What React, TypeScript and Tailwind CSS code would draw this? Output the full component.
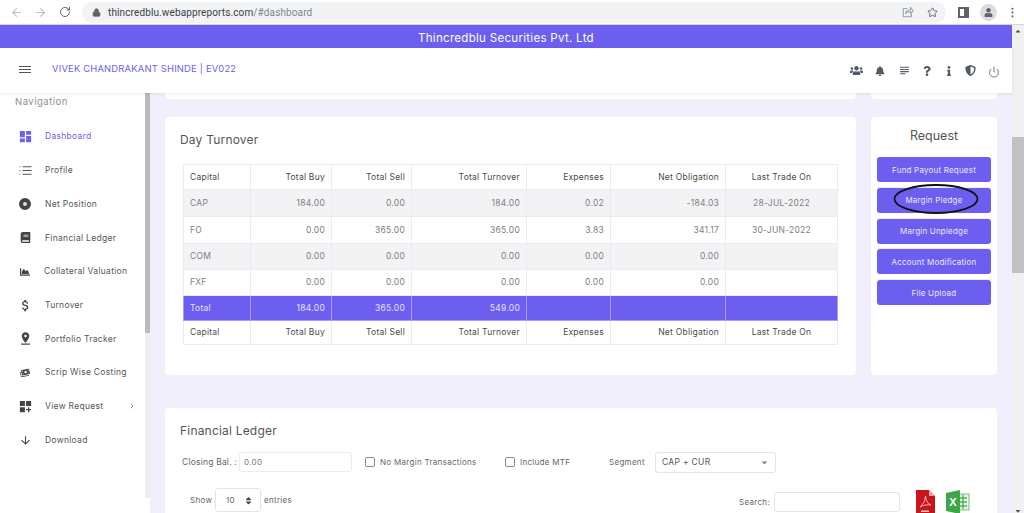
import { ArrowLeft, ArrowRight, RotateCw, Lock, Star, EllipsisVertical, ChevronRight } from "lucide-react";
import { FaUsers, FaBell, FaQuestion, FaInfo, FaShieldAlt, FaBook, FaChartArea, FaCaretUp, FaCaretDown, FaUser } from "react-icons/fa";
import { FaMoneyBills } from "react-icons/fa6";
import { MdDashboard, MdPinDrop, MdDashboardCustomize, MdSubject, MdAttachMoney, MdArrowDownward } from "react-icons/md";
import { FiList, FiPower } from "react-icons/fi";

const navItems = [
  { label: "Dashboard", icon: <MdDashboard className="size-[15px]" />, active: true },
  { label: "Profile", icon: <FiList className="size-[15px] stroke-[1.5]" /> },
  { label: "Net Position", icon: <div className="size-[12px] rounded-full border-[4px] border-[#444] bg-[#ddd]" /> },
  { label: "Financial Ledger", icon: <FaBook className="size-[11px]" /> },
  { label: "Collateral Valuation", icon: <FaChartArea className="size-[10px]" />, shift: true },
  { label: "Turnover", icon: <MdAttachMoney className="size-[15px]" /> },
  { label: "Portfolio Tracker", icon: <MdPinDrop className="size-[15px]" /> },
  { label: "Scrip Wise Costing", icon: <FaMoneyBills className="size-[10px] -rotate-12" /> },
  { label: "View Request", icon: <MdDashboardCustomize className="size-[15px]" />, arrow: true },
  { label: "Download", icon: <MdArrowDownward className="size-[13px]" /> },
];

const headerIcons = [
  { icon: <FaUsers className="size-[13px]" />, slot: "w-[24px]" },
  { icon: <FaBell className="size-[10px]" />, slot: "w-[24px]" },
  { icon: <MdSubject className="size-[13px]" />, slot: "w-[24px]" },
  { icon: <FaQuestion className="size-[10px]" />, slot: "w-[22px]" },
  { icon: <FaInfo className="size-[10px]" />, slot: "w-[21px]" },
  { icon: <FaShieldAlt className="size-[11px]" />, slot: "w-[23px]" },
  { icon: <FiPower className="size-[12px] text-[#777] mt-[3px]" />, slot: "w-[24px]" },
];

const columns = ["Capital", "Total Buy", "Total Sell", "Total Turnover", "Expenses", "Net Obligation", "Last Trade On"];

const rows = [
  { cells: ["CAP", "184.00", "0.00", "184.00", "0.02", "-184.03", "28-JUL-2022"], h: "h-[27px]", bg: "bg-[#f3f3f6]" },
  { cells: ["FO", "0.00", "365.00", "365.00", "3.83", "341.17", "30-JUN-2022"], h: "h-[27px]", bg: "bg-white" },
  { cells: ["COM", "0.00", "0.00", "0.00", "0.00", "0.00", ""], h: "h-[26px]", bg: "bg-[#f3f3f6]" },
  { cells: ["FXF", "0.00", "0.00", "0.00", "0.00", "0.00", ""], h: "h-[26px]", bg: "bg-white" },
];

const requests = ["Fund Payout Request", "Margin Pledge", "Margin Unpledge", "Account Modification", "File Upload"];

function cellAlign(i: number) {
  if (i === 0) return "text-left";
  if (i === 6) return "text-center";
  return "text-right";
}

function ChromeBar() {
  return (
    <div className="h-[25px] flex items-center bg-white text-[#5f6368] border-b border-[#d5d3ea] shrink-0">
      <ArrowLeft className="size-[13px] ml-[10px] text-[#bdbfc3]" />
      <ArrowRight className="size-[13px] ml-[11px] text-[#bdbfc3]" />
      <RotateCw className="size-[12px] ml-[12px] text-[#5f6368]" />
      <div className="ml-[11px] flex-1 h-[21px] rounded-full bg-[#f1f3f4] flex items-center pl-[10px] pr-[8px]">
        <Lock className="size-[9px] text-[#5f6368]" fill="#5f6368" />
        <span className="ml-[7px] text-[10px] text-[#3c4043] font-['Roboto',sans-serif] tracking-[0.12px]">
          thincredblu.webappreports.com<span className="text-[#80868b]">/#dashboard</span>
        </span>
        <svg viewBox="0 0 14 14" className="size-[12px] ml-auto text-[#9aa0a6]" fill="none" stroke="currentColor" strokeWidth="1.2">
          <path d="M6 3H1.5V12.5H11V9" />
          <path d="M4 9C4.5 6 7 4.5 10 4.5V2L13 5.5L10 9V6.5C7.5 6.5 5.5 7 4 9Z" />
        </svg>
        <Star className="size-[11px] ml-[13px] text-[#5f6368]" />
      </div>
      <div className="size-[11px] ml-[12px] border-2 border-[#5f6368] flex justify-end">
        <div className="w-[3px] bg-[#5f6368]" />
      </div>
      <div className="size-[17px] ml-[11px] rounded-full bg-[#dadce0] flex items-center justify-center">
        <FaUser className="size-[9px] text-[#5f6368]" />
      </div>
      <EllipsisVertical className="size-[13px] ml-[9px] mr-[5px]" />
    </div>
  );
}

function Header() {
  return (
    <div className="h-[45px] flex items-center bg-white shadow-[0_1px_3px_rgba(0,0,0,0.08)] z-10 relative shrink-0">
      <div className="ml-[19px] -mt-[2px] w-[12px] flex flex-col gap-[1.5px]">
        <div className="h-[1.5px] bg-[#555]" />
        <div className="h-[1.5px] bg-[#555]" />
        <div className="h-[1.5px] bg-[#555]" />
      </div>
      <span className="ml-[21px] -mt-[3px] text-[#6c5ff0] text-[9.4px] tracking-[0.2px]">VIVEK CHANDRAKANT SHINDE | EV022</span>
      <div className="ml-auto flex items-center text-[#4f5b67] pr-[6px]">
        {headerIcons.map((h, i) => (
          <div key={i} className={`${h.slot} flex justify-center`}>{h.icon}</div>
        ))}
      </div>
    </div>
  );
}

function Sidebar() {
  return (
    <div className="w-[150px] shrink-0 flex bg-white h-full">
      <div className="flex-1 min-w-0">
        <div className="pl-[15px] h-[17px] mt-[1px] flex items-center text-[9.5px] tracking-[0.5px] text-[#8a8f94]">Navigation</div>
        <div className="mt-[9px] flex flex-col">
          {navItems.map(item => (
            <div key={item.label} className={`h-[33.7px] flex items-center pr-[9px] ${item.active ? "text-[#6c5ff0]" : "text-[#555]"}`}>
              <div className={`w-[45px] flex justify-center pl-[5px] shrink-0 ${item.active ? "" : "text-[#444]"}`}>{item.icon}</div>
              <span className={`text-[8.5px] tracking-[0.3px] whitespace-nowrap ${item.shift ? "-ml-[1px]" : ""}`}>{item.label}</span>
              {item.arrow && <ChevronRight className="size-[8px] ml-auto" />}
            </div>
          ))}
        </div>
      </div>
      <div className="w-[5px] h-[405px] bg-[#eeeeee]">
        <div className="h-[240px] bg-[#bbbbbb]" />
      </div>
    </div>
  );
}

function TurnoverTable() {
  return (
    <table className="table-fixed w-[654px] border-collapse text-[8.5px] tracking-[0.25px]">
      <colgroup>
        <col className="w-[67px]" />
        <col className="w-[81px]" />
        <col className="w-[80px]" />
        <col className="w-[115px]" />
        <col className="w-[84px]" />
        <col className="w-[115px]" />
        <col className="w-[112px]" />
      </colgroup>
      <thead>
        <tr className="h-[25px] text-[#4a4a4a]">
          {columns.map((c, i) => (
            <th key={c} className={`font-normal border border-[#ececf0] px-[6px] ${cellAlign(i)}`}>{c}</th>
          ))}
        </tr>
      </thead>
      <tbody>
        {rows.map(r => (
          <tr key={r.cells[0]} className={`${r.h} ${r.bg} text-[#7d7f83]`}>
            {r.cells.map((c, i) => (
              <td key={i} className={`border border-[#ececf0] px-[6px] ${cellAlign(i)}`}>{c}</td>
            ))}
          </tr>
        ))}
        <tr className="h-[25px] bg-[#6c5ff0] text-[#e4e1fd]">
          {["Total", "184.00", "365.00", "549.00", "", "", ""].map((c, i) => (
            <td key={i} className={`border border-[#a59df6] px-[6px] ${cellAlign(i)}`}>{c}</td>
          ))}
        </tr>
      </tbody>
      <tfoot>
        <tr className="h-[24px] text-[#4a4a4a]">
          {columns.map((c, i) => (
            <th key={c} className={`font-normal border border-[#ececf0] px-[6px] ${cellAlign(i)}`}>{c}</th>
          ))}
        </tr>
      </tfoot>
    </table>
  );
}

function RequestCard() {
  return (
    <div className="w-[126px] h-[258px] shrink-0 bg-white rounded-[4px] px-[6px] relative">
      <div className="h-[40px] -mt-[1px] flex items-center justify-center text-[12.5px] text-[#555]">Request</div>
      <div className="flex flex-col pt-[1px]">
        {requests.map(r => (
          <div key={r} className="h-[30.8px] border-b border-[#eeeeee] last:border-b-0">
            <div className="h-[25px] rounded-[3px] bg-[#6c5ff0] text-[#e9e7fe] text-[8px] tracking-[0.2px] flex items-center justify-center">{r}</div>
          </div>
        ))}
      </div>
      <svg className="absolute left-[22px] top-[67px] w-[86px] h-[30px]" viewBox="0 0 86 30">
        <ellipse cx="43" cy="15" rx="41.5" ry="14" fill="none" stroke="#111" strokeWidth="1.8" />
      </svg>
    </div>
  );
}

function PdfIcon() {
  return (
    <svg viewBox="0 0 21 24" className="w-[21px] h-[24px]">
      <path d="M1 0H14L20 6V24H1Z" fill="#c9141b" />
      <path d="M14 0L20 6H14Z" fill="#f0a0a0" />
      <path d="M5 17C8 15 10 11 10.5 6C11 11 13 14 16 15C12 14.5 8 15 5 17Z" fill="none" stroke="#f6d5d5" strokeWidth="0.8" />
      <rect x="6" y="20.5" width="8" height="1.5" fill="#f6d5d5" />
    </svg>
  );
}

function ExcelIcon() {
  return (
    <svg viewBox="0 0 24 24" className="w-[24px] h-[24px]">
      <rect x="11" y="4" width="12" height="16" fill="#e8f5e9" stroke="#52b05a" strokeWidth="0.8" />
      <path d="M13 8H21M13 12H21M13 16H21M17 5V19" stroke="#52b05a" strokeWidth="1.4" />
      <path d="M0 3L14 0V24L0 21Z" fill="#3fa648" />
      <text x="7" y="16" textAnchor="middle" fontSize="11" fontWeight="700" fill="#fff" fontFamily="Liberation Sans, sans-serif">X</text>
    </svg>
  );
}

function LedgerCard() {
  return (
    <div className="mt-[33px] bg-white rounded-[4px] h-[200px] px-[15px] text-[#666]">
      <div className="h-[44px] pt-[1px] flex items-center text-[12px] tracking-[0.2px] text-[#555]">Financial Ledger</div>
      <div className="h-[20px] flex items-center text-[8px] tracking-[0.3px]">
        <span className="ml-[2px] w-[57px] text-[8.5px] tracking-[0.2px] whitespace-nowrap">Closing Bal. :</span>
        <div className="w-[113px] h-[20px] border border-[#eceaf8] rounded-[3px] flex items-center pl-[4px] text-[#777]">0.00</div>
        <div className="ml-[13px] size-[10px] border border-[#888] rounded-[2px]" />
        <span className="ml-[5px] w-[125px]">No Margin Transactions</span>
        <div className="size-[10px] border border-[#888] rounded-[2px]" />
        <span className="ml-[5px] w-[89px]">Include MTF</span>
        <span className="w-[46px]">Segment</span>
        <div className="w-[121px] h-[21px] border border-[#e4e4e8] rounded-[3px] flex items-center px-[6px] text-[#555] text-[8.5px]">
          CAP + CUR
          <FaCaretDown className="size-[9px] ml-auto text-[#888]" />
        </div>
      </div>
      <div className="mt-[16px] flex items-start text-[8px] tracking-[0.3px]">
        <span className="ml-[10px] w-[25px] mt-[6px]">Show</span>
        <div className="w-[46px] h-[24px] border border-[#e4e4e8] rounded-[3px] flex items-center pl-[10px] pr-[7px]">
          10
          <div className="ml-auto flex flex-col text-[#444] -space-y-[5px]">
            <FaCaretUp className="size-[9px]" />
            <FaCaretDown className="size-[9px]" />
          </div>
        </div>
        <span className="ml-[3px] mt-[6px]">entries</span>
        <span className="ml-auto mt-[8px]">Search:</span>
        <div className="ml-[4px] mt-[4px] w-[126px] h-[20px] border border-[#e4e4e8] rounded-[3px]" />
        <div className="ml-[15px] mt-[2px]"><PdfIcon /></div>
        <div className="ml-[10px] mr-[12px] mt-[2px]"><ExcelIcon /></div>
      </div>
    </div>
  );
}

function PageScrollbar() {
  return (
    <div className="w-[12px] shrink-0 bg-[#f1f1f1] flex flex-col items-center h-full">
      <FaCaretUp className="size-[8px] text-[#555] mt-[2px]" />
      <div className="w-full h-[136px] mt-[102px] bg-[#c1c1c1]" />
      <FaCaretDown className="size-[8px] text-[#555] mt-auto -mb-[2px]" />
    </div>
  );
}

export default function App() {
  return (
    <div className="w-[1024px] h-[513px] overflow-hidden flex flex-col font-['Inter',sans-serif] bg-[#f1effb]">
      <ChromeBar />
      <div className="flex-1 min-h-0 flex">
        <div className="flex-1 min-w-0 flex flex-col">
          <div className="h-[23px] shrink-0 bg-[#6c5ff0] text-white text-[11.5px] tracking-[0.3px] flex items-center justify-center pt-[4px]">Thincredblu Securities Pvt. Ltd</div>
          <Header />
          <div className="flex-1 min-h-0 flex">
            <Sidebar />
            <main className="flex-1 min-w-0 px-[15px]">
              <div className="flex gap-[15px] h-[6px]">
                <div className="flex-1 bg-white rounded-b-[4px]" />
                <div className="w-[126px] bg-white rounded-b-[4px]" />
              </div>
              <div className="mt-[18px] flex gap-[15px]">
                <div className="flex-1 h-[258px] bg-white rounded-[4px] pl-[18px]">
                  <div className="h-[45px] mb-[2px] flex items-center text-[12px] tracking-[0.2px] text-[#555] -ml-[3px]">Day Turnover</div>
                  <TurnoverTable />
                </div>
                <RequestCard />
              </div>
              <LedgerCard />
            </main>
          </div>
        </div>
        <PageScrollbar />
      </div>
    </div>
  );
}
